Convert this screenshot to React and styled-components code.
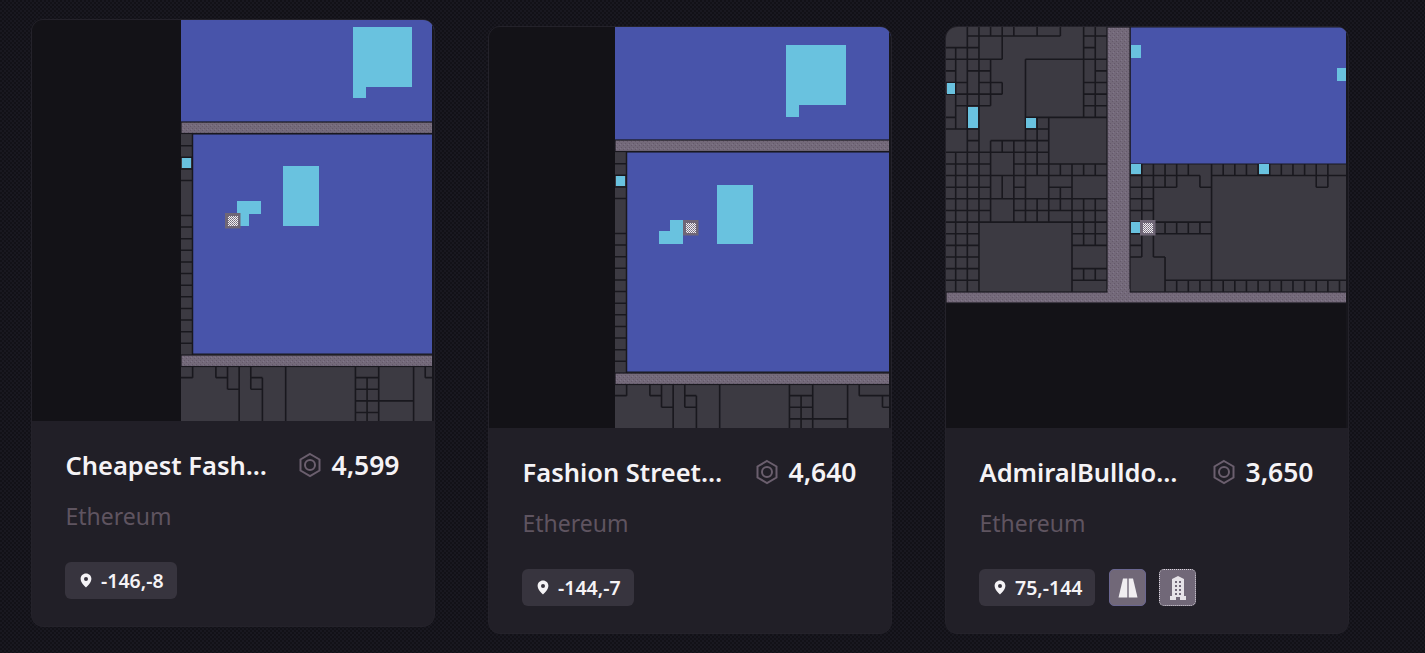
import React from 'react';
import styled, { createGlobalStyle } from 'styled-components';

const GlobalStyle = createGlobalStyle`
  html, body {
    margin: 0;
    height: 100%;
    overflow: hidden;
    background-color: #14131a;
    background-image: conic-gradient(#191820 25%, #121117 0 50%, #191820 0 75%, #121117 0);
    background-size: 4px 4px;
  }
`;

// Page row holding the parcel cards
const CardRow = styled.div`
  display: flex;
  gap: 53px;
  padding: 26px 0 0 31px;
  font-family: 'Noto Sans', 'Open Sans', sans-serif;
`;

const Card = styled.article`
  width: 404px;
  height: 608px;
  box-sizing: border-box;
  flex-shrink: 0;
  background: #211f27;
  border: 1px solid #24222a;
  border-radius: 12px;
  overflow: hidden;
  transform: translateY(${(p) => (p.$raised ? '-7px' : '0')});
`;

const MapFrame = styled.div`
  height: 401px;
  background: #131217;
  svg {
    display: block;
  }
`;

const CardBody = styled.div`
  padding: 26px 34.5px 0 33.5px;
`;

const TitleRow = styled.div`
  display: flex;
  align-items: center;
  justify-content: space-between;
  height: 36px;
`;

const Title = styled.h3`
  margin: 0;
  font-size: 25.5px;
  line-height: 36px;
  font-weight: 600;
  color: #f5f3f6;
  white-space: nowrap;
`;

const Price = styled.div`
  display: flex;
  align-items: center;
  gap: 9px;
  font-size: 26.5px;
  line-height: 36px;
  font-weight: 600;
  color: #f5f3f6;
`;

const Network = styled.div`
  margin-top: 18px;
  font-size: 23px;
  line-height: 30px;
  color: #5f5460;
`;

const TagRow = styled.div`
  display: flex;
  align-items: center;
  gap: 13px;
  margin: 31px 0 0 -0.5px;
`;

const CoordBadge = styled.div`
  display: flex;
  align-items: center;
  gap: 9px;
  height: 37px;
  box-sizing: border-box;
  margin-right: 1px;
  padding: 0 13px 0 15px;
  border-radius: 6px;
  background: #37343e;
  font-size: 19.5px;
  font-weight: 600;
  color: #f5f3f6;
`;

const IconTile = styled.div`
  display: flex;
  align-items: center;
  justify-content: center;
  width: 37px;
  height: 37px;
  box-sizing: border-box;
  border-radius: 5px;
  background: #716878;
  border: ${(p) => (p.$outlined ? '1px dotted #d8d4dc' : '1px solid #6a6690')};
`;

const P = 11.63;
const LINE = '#19181e';
const LAND = '#3c3a42';
const ROAD = '#746a7a';
const BLUE = '#4854aa';
const CYAN = '#69c2df';

const ManaIcon = () => (
  <svg width="24" height="26" viewBox="0 0 24 26" fill="none" stroke="#6b5f6e" strokeWidth="2">
    <path d="M12 2 L21.5 7.5 V18.5 L12 24 L2.5 18.5 V7.5 Z" />
    <circle cx="12" cy="13" r="5" />
  </svg>
);

const PinIcon = () => (
  <svg width="12" height="15" viewBox="0 0 12 15">
    <path
      fill="#f5f3f6"
      fillRule="evenodd"
      d="M6 0.5 C2.9 0.5 0.6 2.8 0.6 5.8 C0.6 9.4 4.4 13 6 14.5 C7.6 13 11.4 9.4 11.4 5.8 C11.4 2.8 9.1 0.5 6 0.5 Z M6 3.9 A2 2 0 1 1 6 7.9 A2 2 0 1 1 6 3.9 Z"
    />
  </svg>
);

const RoadIcon = () => (
  <svg width="24" height="24" viewBox="0 0 24 24" fill="#f0edf1">
    <path d="M7 2.5 H11.3 V21.5 H2.5 Z" />
    <path d="M12.7 2.5 H17 L21.5 21.5 H12.7 Z" />
  </svg>
);

const BuildingIcon = () => (
  <svg width="22" height="26" viewBox="0 0 22 26">
    <path
      fill="#e6e3e8"
      fillRule="evenodd"
      d="M5 4 L11 1 L17 4 V21 H19 V25 H13 V22 H9 V25 H3 V21 H5 Z M8 6 h2 v2 h-2 Z M12 6 h2 v2 h-2 Z M8 10 h2 v2 h-2 Z M12 10 h2 v2 h-2 Z M8 14 h2 v2 h-2 Z M12 14 h2 v2 h-2 Z M8 18 h2 v2 h-2 Z M12 18 h2 v2 h-2 Z"
    />
  </svg>
);

// small district marker with the noisy checker square in the middle
const Marker = ({ x, y }) => (
  <g>
    <rect x={x} y={y} width="15.5" height="15.5" fill="#6f6676" />
    <rect x={x + 3} y={y + 3} width="10" height="10" fill="url(#checker)" />
  </g>
);

const Defs = () => (
  <defs>
    <pattern id="checker" width="2" height="2" patternUnits="userSpaceOnUse">
      <rect width="2" height="2" fill="#f1eff2" />
      <rect width="1" height="1" fill="#716878" />
      <rect x="1" y="1" width="1" height="1" fill="#8d8594" />
    </pattern>
    <pattern id="roadgrain" width="4" height="4" patternUnits="userSpaceOnUse">
      <rect width="4" height="4" fill={ROAD} />
      <rect width="1" height="1" fill="#65596b" />
      <rect x="2" y="2" width="1" height="1" fill="#65596b" />
      <rect x="3" y="1" width="1" height="1" fill="#80758a" />
    </pattern>
  </defs>
);

const Road = ({ x, y, w, h }) => (
  <rect x={x} y={y} width={w} height={h} fill="url(#roadgrain)" stroke={LINE} strokeWidth="1.2" />
);

// thin dark strip that closes the map on its right side
const MapEdge = () => <rect x="400" y="0" width="2" height="401" fill="#17161c" />;

// bottom strip and left column shared by the two fashion street parcels
const STRIP_LINES = [
  [1, 0, 1, 1], [0, 1, 1, 1], [3, 0, 3, 1], [3, 1, 4, 1], [4, 0, 4, 2], [4, 2, 5, 2], [5, 0, 5, 5],
  [6, 0, 6, 2], [6, 1, 7, 1], [6, 2, 7, 2], [7, 1, 7, 5], [9, 0, 9, 5], [15, 0, 15, 5], [16, 1, 16, 5],
  [17, 0, 17, 5], [15, 1, 17, 1], [15, 2, 17, 2], [15, 3, 20, 3], [15, 4, 17, 4], [20, 0, 20, 5],
  [21, 0, 21, 1], [21, 1, 25, 1], [23, 1, 23, 2], [23, 2, 25, 2],
];

const DistrictMap = ({ left, roadTop, cyan, marker }) => {
  const bottomRoad = roadTop + 233;
  const stripTop = bottomRoad + 11;
  const colRight = left + 11.5;
  const rows = [];
  for (let k = 1; k < 19; k++) {
    if (k === 5 || k === 6) continue;
    rows.push(`M${left} ${roadTop + 12 + k * P}H${colRight}`);
  }
  const strip = STRIP_LINES.map(
    ([a, b, c, d]) => `M${left + a * P} ${stripTop + b * P}L${left + c * P} ${stripTop + d * P}`,
  );
  return (
    <svg width="402" height="401" viewBox="0 0 402 401">
      <Defs />
      <rect x={left} y="0" width={402 - left} height="401" fill={LAND} />
      <rect x={left} y="0" width={402 - left} height={roadTop} fill={BLUE} />
      <rect x={colRight} y={roadTop + 12} width={402 - colRight} height="220" fill={BLUE} stroke={LINE} />
      <path d={rows.join('') + `M${colRight} ${roadTop}V${bottomRoad}`} stroke={LINE} strokeWidth="1.5" fill="none" />
      <Road x={left} y={roadTop} w={402 - left} h="11.5" />
      <Road x={left} y={bottomRoad} w={402 - left} h="11.5" />
      <path d={strip.join('')} stroke={LINE} strokeWidth="1.6" fill="none" />
      {cyan.map(([x, y, w, h]) => (
        <rect key={`${x}-${y}`} x={x} y={y} width={w} height={h} fill={CYAN} />
      ))}
      <Marker x={marker[0]} y={marker[1]} />
      <MapEdge />
    </svg>
  );
};

// Estates on the third map, in grid cells: each entry is one estate made of rects
const ESTATES = [
  [[0, 0, 2, 2]],
  [[3, 1, 2, 2]],
  [[10, 0, 2, 1], [5, 1, 7, 2], [4, 3, 3, 2], [5, 5, 2, 1], [4, 6, 3, 1], [3, 7, 4, 3], [3, 10, 1, 1]],
  [[7, 3, 5, 5]],
  [[6, 0, 2, 1]],
  [[8, 0, 2, 1]],
  [[1, 3, 1, 2]],
  [[2, 4, 1, 2]],
  [[0, 6, 1, 2]],
  [[1, 7, 1, 2]],
  [[2, 7, 1, 2]],
  [[0, 9, 2, 2]],
  [[13, 1, 1, 2]],
  [[12, 3, 1, 2]],
  [[9, 8, 5, 4]],
  [[4, 11, 2, 2]],
  [[4, 13, 1, 2]],
  [[5, 13, 1, 2]],
  [[7, 13, 2, 2]],
  [[9, 13, 2, 1]],
  [[11, 13, 3, 2]],
  [[4, 15, 2, 2]],
  [[9, 16, 2, 1]],
  [[3, 17, 8, 6]],
  [[11, 19, 3, 2]],
  [[11, 22, 3, 1]],
  [[21, 12, 2, 1], [22, 13, 1, 1]],
  [[18, 14, 5, 3], [20, 13, 2, 1]],
  [[23, 13, 9, 9], [32, 14, 3, 8], [33, 13, 2, 1]],
  [[33, 12, 2, 1]],
  [[18, 18, 5, 2], [19, 20, 4, 2]],
  [[17, 18, 1, 2], [16, 20, 3, 3]],
];

const gx = (c) => (c === 0 ? 0 : Math.min(402, 9.7 + (c - 1) * P));
const gy = (r) => (r === 0 ? 0 : 9 + (r - 1) * P);

// Walk the cell grid and draw an edge wherever two neighbouring cells belong to different estates
const estateEdges = () => {
  const owner = {};
  ESTATES.forEach((rects, id) => {
    rects.forEach(([c, r, w, h]) => {
      for (let i = c; i < c + w; i++) for (let j = r; j < r + h; j++) owner[`${i},${j}`] = id;
    });
  });
  const inLand = (c, r) => r >= 0 && r <= 22 && ((c >= 0 && c <= 13) || (r >= 12 && c >= 16 && c <= 34));
  const same = (a, b, c, d) => {
    const o1 = owner[`${a},${b}`];
    return o1 !== undefined && o1 === owner[`${c},${d}`];
  };
  let d = '';
  for (let c = 0; c <= 34; c++) {
    for (let r = 0; r <= 22; r++) {
      if (!inLand(c, r)) continue;
      const right = gx(c + 1);
      const bottom = gy(r + 1);
      if (inLand(c + 1, r) && !same(c, r, c + 1, r)) d += `M${right} ${gy(r)}V${bottom}`;
      if (r < 22 && inLand(c, r + 1) && !same(c, r, c, r + 1)) d += `M${gx(c)} ${bottom}H${right}`;
    }
  }
  return d;
};

const ADMIRAL_CYAN = [
  [1, 56, 8, 11], [22, 80, 10, 21], [80, 91, 10, 10], [185, 18, 10, 13], [391, 41, 9, 13],
  [185, 137, 10, 10], [313, 137, 10, 10], [185, 195, 10, 11],
];

const LandMap = () => (
  <svg width="402" height="401" viewBox="0 0 402 401">
    <Defs />
    <rect x="0" y="0" width="402" height="265" fill={LAND} />
    <path d={estateEdges()} stroke={LINE} strokeWidth="1.6" fill="none" />
    <rect x="184" y="0" width="218" height="137" fill={BLUE} stroke={LINE} />
    <Road x="161" y="0" w="23" h="265" />
    <Road x="0" y="265" w="402" h="11" />
    <rect x="161.6" y="262" width="22" height="6" fill="url(#roadgrain)" />
    {ADMIRAL_CYAN.map(([x, y, w, h]) => (
      <rect key={`${x}-${y}`} x={x} y={y} width={w} height={h} fill={CYAN} />
    ))}
    <Marker x={194} y={193} />
    <MapEdge />
  </svg>
);

const ParcelCard = ({ raised, name, price, coords, map, tags }) => (
  <Card $raised={raised}>
    <MapFrame>{map}</MapFrame>
    <CardBody>
      <TitleRow>
        <Title>{name}</Title>
        <Price>
          <ManaIcon />
          {price}
        </Price>
      </TitleRow>
      <Network>Ethereum</Network>
      <TagRow>
        <CoordBadge>
          <PinIcon />
          {coords}
        </CoordBadge>
        {tags}
      </TagRow>
    </CardBody>
  </Card>
);

export default function App() {
  return (
    <>
      <GlobalStyle />
      <CardRow>
        <ParcelCard
          raised
          name="Cheapest Fash…"
          price="4,599"
          coords="-146,-8"
          map={
            <DistrictMap
              left={149}
              roadTop={102}
              marker={[193, 193]}
              cyan={[
                [321, 7, 59, 60], [321, 67, 13, 11], [150, 138, 9, 10], [251, 146, 36, 60],
                [205, 181, 24, 13], [205, 194, 12, 12],
              ]}
            />
          }
        />
        <ParcelCard
          name="Fashion Street…"
          price="4,640"
          coords="-144,-7"
          map={
            <DistrictMap
              left={126}
              roadTop={113}
              marker={[194, 193]}
              cyan={[
                [297, 18, 60, 60], [297, 78, 13, 12], [127, 149, 9, 10], [228, 158, 36, 59],
                [170, 204, 24, 13], [181, 193, 13, 11],
              ]}
            />
          }
        />
        <ParcelCard
          name="AdmiralBulldo…"
          price="3,650"
          coords="75,-144"
          map={<LandMap />}
          tags={
            <>
              <IconTile>
                <RoadIcon />
              </IconTile>
              <IconTile $outlined>
                <BuildingIcon />
              </IconTile>
            </>
          }
        />
      </CardRow>
    </>
  );
}
